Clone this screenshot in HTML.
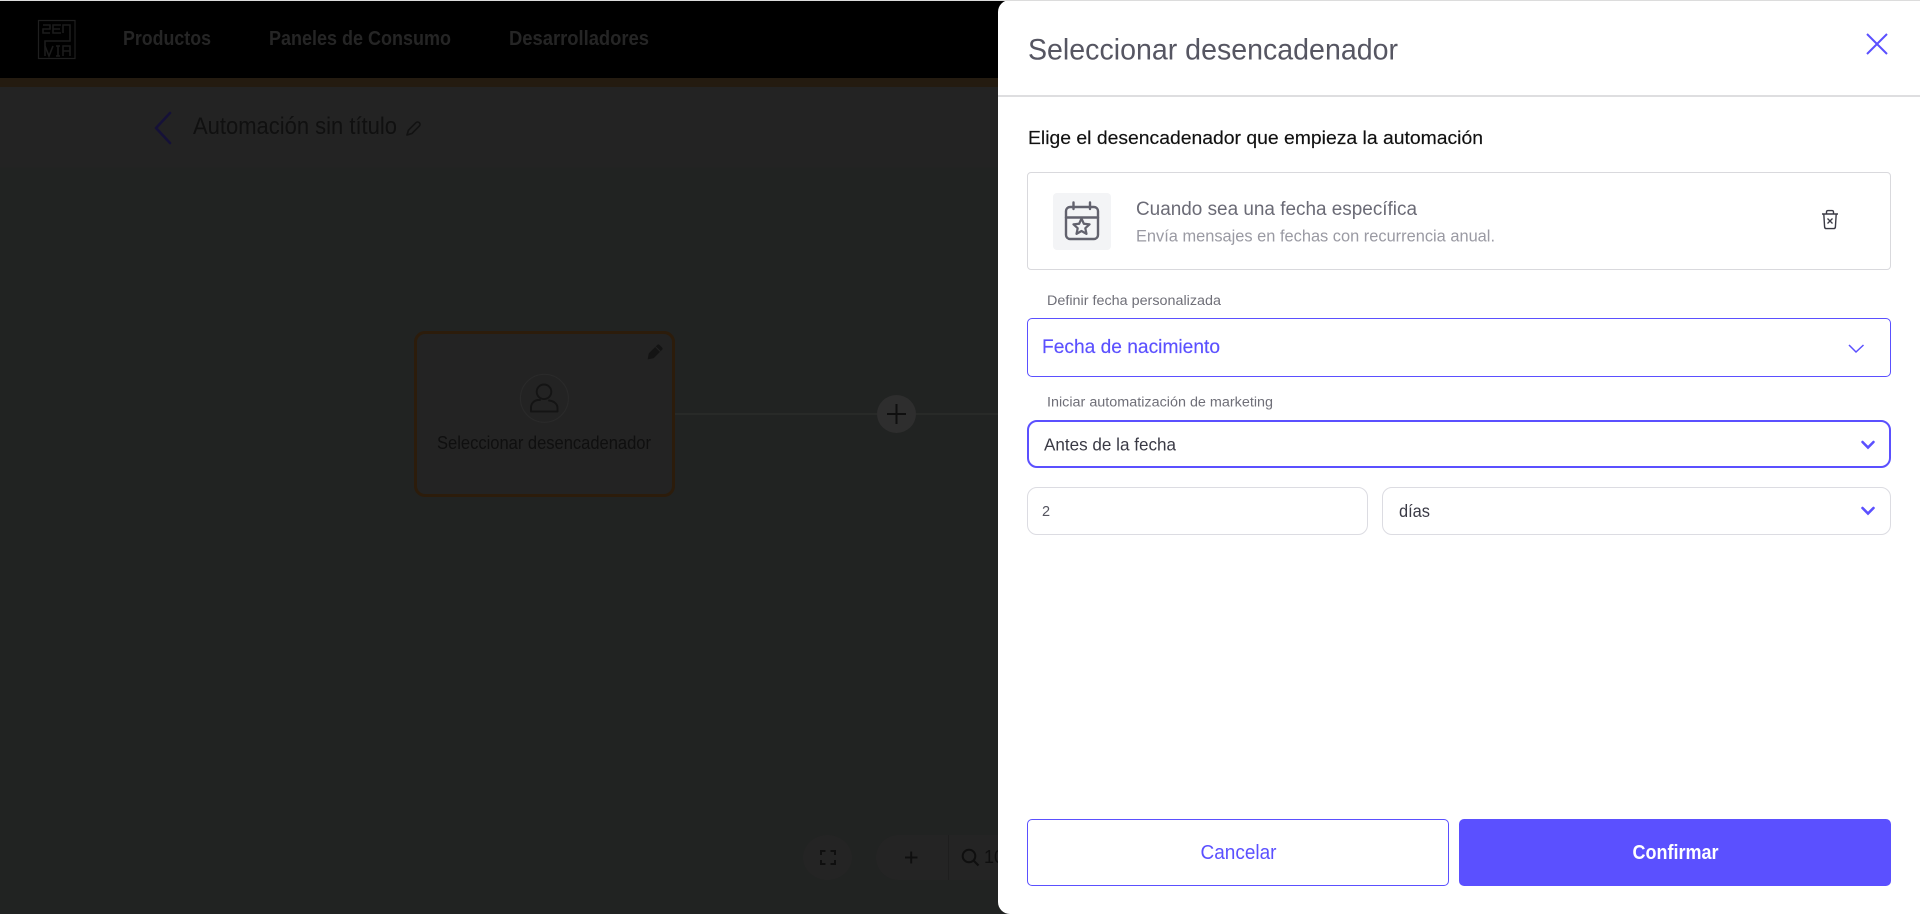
<!DOCTYPE html>
<html lang="es">
<head>
<meta charset="utf-8">
<title>Seleccionar desencadenador</title>
<style>
html,body{margin:0;padding:0;width:1920px;height:914px;overflow:hidden;background:#212322}
*{box-sizing:border-box}
div{position:absolute}
svg{position:absolute;left:0;top:0;display:block}
text{font-family:"Liberation Sans",sans-serif;white-space:pre}
#topline{left:0;top:0;width:1920px;height:1px;background:#dcdcdc;z-index:5}
#nav{left:0;top:0;width:1920px;height:78px;background:#000}
#strip{left:0;top:78px;width:1920px;height:9px;background:#241b10}
#sub{left:0;top:87px;width:1920px;height:81px;background:#232323;border-bottom:1px solid #222322}
#node{left:414px;top:331px;width:261px;height:166px;background:#232323;border:3px solid #2c1c0b;border-radius:11px}
#fs{left:803px;top:835px;width:49px;height:45px;border-radius:50%;background:#242424}
#pill{left:876px;top:835px;width:140px;height:45px;border-radius:23px 0 0 23px;background:#242424}
#plus{left:877px;top:395px;width:39px;height:38px;border-radius:50%;background:#2e2e2e}
#panel{left:998px;top:0;width:922px;height:914px;background:#fff;border-radius:12px 0 0 12px}
.b{left:29px;width:864px}
#hr{left:0;top:95px;width:922px;height:1.5px;background:#dedee0}
#card{top:172px;height:98px;border:1.5px solid #d9d9dd;border-radius:4px}
#ico{left:55px;top:193px;width:58px;height:57px;background:#f3f4f6;border-radius:4px}
#s1{top:318px;height:59px;border:1.5px solid #5b50ff;border-radius:5px}
#s2{top:420px;height:48px;border:2.5px solid #5b50ff;border-radius:10px}
#i3{left:29px;top:487px;width:341px;height:48px;border:1.5px solid #dcdce2;border-radius:10px}
#s4{left:384px;top:487px;width:509px;height:48px;border:1.5px solid #dcdce2;border-radius:10px}
#cancel{left:29px;top:819px;width:422px;height:67px;border:1.5px solid #5b50ff;border-radius:5px}
#ok{left:461px;top:819px;width:432px;height:67px;background:#5b50ff;border-radius:5px}
</style>
</head>
<body>
<div id="nav"></div>
<div id="strip"></div>
<div id="sub"></div>
<div id="node"></div>
<div id="plus"></div>
<div id="fs"></div>
<div id="pill"></div>

<svg width="1920" height="914" viewBox="0 0 1920 914" fill="none">
  <!-- logo -->
  <rect x="38.5" y="20.5" width="36.5" height="38" stroke="#1f1f1f" stroke-width="1.2"/>
  <g stroke="#1c1c1c" stroke-width="1.6" fill="none">
    <path d="M43 25H50V29H43V33H50"/>
    <path d="M61 25H53V33H61M53 29H60"/>
    <path d="M63 33V25H70V41H45V56"/>
    <path d="M45 46L49 56L53 46"/>
    <path d="M56 46H60M58 46V56M56 56H60"/>
    <path d="M63 56V46H70V56M63 51H70"/>
  </g>
  <g fill="#252525" font-weight="700" font-size="20">
    <text x="123" y="45" textLength="88" lengthAdjust="spacingAndGlyphs">Productos</text>
    <text x="269" y="45" textLength="182" lengthAdjust="spacingAndGlyphs">Paneles de Consumo</text>
    <text x="509" y="45" textLength="140" lengthAdjust="spacingAndGlyphs">Desarrolladores</text>
  </g>
  <!-- back + title -->
  <path d="M170 113L156 128L170 143" stroke="#151138" stroke-width="2.6" stroke-linecap="round" stroke-linejoin="round"/>
  <text x="193" y="134" font-size="24" fill="#101010" textLength="204" lengthAdjust="spacingAndGlyphs">Automación sin título</text>
  <g transform="translate(413 129) rotate(45)" stroke="#121212" stroke-width="1.6" stroke-linejoin="round">
    <path d="M-2.4 -6.5A2.4 2.4 0 0 1 2.4 -6.5V4L0 8.5L-2.4 4Z"/>
  </g>
  <!-- connector -->
  <rect x="675" y="413" width="202" height="2" fill="#282a28"/>
  <rect x="916" y="413" width="82" height="2" fill="#282a28"/>
  <path d="M887 414H906M896.5 404V424" stroke="#0f0f0f" stroke-width="2"/>
  <!-- node contents -->
  <g transform="translate(654 353) rotate(45)">
    <path d="M-3.4 -8A1.6 1.6 0 0 1 -1.8 -9.6H1.8A1.6 1.6 0 0 1 3.4 -8V4L0 9L-3.4 4Z" fill="#141414"/>
    <path d="M-3.4 -5.5H3.4" stroke="#232323" stroke-width="1"/>
  </g>
  <circle cx="544.4" cy="398.3" r="24" stroke="#2a2a2a" stroke-width="1.1"/>
  <circle cx="544" cy="391.8" r="7.3" stroke="#141414" stroke-width="1.9"/>
  <path d="M540 400H538.5A7.5 7.5 0 0 0 531 407.5V411.5H557.5V408C557.5 404 554 401 549 400.5" stroke="#141414" stroke-width="1.9" stroke-linejoin="round" stroke-linecap="round"/>
  <text x="437" y="449" font-size="18" fill="#0f0f0f" textLength="214" lengthAdjust="spacingAndGlyphs">Seleccionar desencadenador</text>
  <!-- bottom controls -->
  <path d="M821 855V851H825.5M830.5 851H835V855M835 860V864H830.5M825.5 864H821V860" stroke="#0f0f0f" stroke-width="2"/>
  <path d="M905 857.5H917.5M911.2 851.5V863.5" stroke="#0f0f0f" stroke-width="2"/>
  <rect x="948" y="835" width="1" height="45" fill="#1e1e1e"/>
  <circle cx="969" cy="856" r="6.3" stroke="#0f0f0f" stroke-width="2"/>
  <path d="M973.5 860.5L978.5 865.5" stroke="#0f0f0f" stroke-width="2.2"/>
  <text x="984" y="863" font-size="18" fill="#0f0f0f">100%</text>
</svg>

<div id="panel">
  <div id="hr"></div>
  <div id="card" class="b"></div>
  <div id="ico"></div>
  <div id="s1" class="b"></div>
  <div id="s2" class="b"></div>
  <div id="i3"></div>
  <div id="s4"></div>
  <div id="cancel"></div>
  <div id="ok"></div>
  <svg width="922" height="914" viewBox="998 0 922 914" fill="none">
    <text x="1028" y="59.5" font-size="29.5" fill="#565662" textLength="370" lengthAdjust="spacingAndGlyphs">Seleccionar desencadenador</text>
    <path d="M1867 34L1887 54M1887 34L1867 54" stroke="#5b50ff" stroke-width="2"/>
    <text x="1028" y="144" font-size="18.5" fill="#111" stroke="#111" stroke-width=".15" textLength="455" lengthAdjust="spacingAndGlyphs">Elige el desencadenador que empieza la automación</text>

    <!-- calendar star -->
    <rect x="1066" y="207" width="32" height="32" rx="4" stroke="#62626e" stroke-width="2.4"/>
    <path d="M1066 217.5H1098M1073.5 202.5V209M1090 202.5V209" stroke="#62626e" stroke-width="2.4" stroke-linecap="round"/>
    <path transform="translate(1081.5 227)" d="M0 -8.5L2.35 -3.24L8.08 -2.63L3.8 1.24L5 6.88L0 4L-5 6.88L-3.8 1.24L-8.08 -2.63L-2.35 -3.24Z" stroke="#62626e" stroke-width="2.2" stroke-linejoin="round"/>

    <text x="1136" y="215" font-size="19" fill="#6b6b76" textLength="281" lengthAdjust="spacingAndGlyphs">Cuando sea una fecha específica</text>
    <text x="1136" y="241.5" font-size="16.5" fill="#9a9aa3" textLength="359" lengthAdjust="spacingAndGlyphs">Envía mensajes en fechas con recurrencia anual.</text>

    <!-- trash -->
    <path d="M1822 214H1838M1826.5 214V212A1.5 1.5 0 0 1 1828 210.6H1832A1.5 1.5 0 0 1 1833.5 212V214M1823.8 214L1824.6 227A1.8 1.8 0 0 0 1826.4 228.6H1833.6A1.8 1.8 0 0 0 1835.4 227L1836.2 214" stroke="#3a3a45" stroke-width="1.4" stroke-linejoin="round"/>
    <path d="M1827.5 218.5L1832.5 223.5M1832.5 218.5L1827.5 223.5" stroke="#3a3a45" stroke-width="1.3"/>

    <text x="1047" y="305" font-size="13.5" fill="#6f6f78" textLength="174" lengthAdjust="spacingAndGlyphs">Definir fecha personalizada</text>
    <text x="1042" y="353" font-size="19.5" fill="#5b50ff" stroke="#5b50ff" stroke-width=".15" textLength="178" lengthAdjust="spacingAndGlyphs">Fecha de nacimiento</text>
    <path d="M1849 345L1856 352L1863.5 345" stroke="#5b50ff" stroke-width="1.5"/>

    <text x="1047" y="406.5" font-size="13.5" fill="#6f6f78" textLength="226" lengthAdjust="spacingAndGlyphs">Iniciar automatización de marketing</text>
    <text x="1044" y="450.5" font-size="17.5" fill="#3a3a45" textLength="132" lengthAdjust="spacingAndGlyphs">Antes de la fecha</text>
    <path d="M1862.5 442L1868 447.5L1873.5 442" stroke="#5b50ff" stroke-width="2.6" stroke-linecap="round"/>

    <text x="1042" y="516" font-size="14.5" fill="#55555f">2</text>
    <text x="1399" y="517" font-size="17.5" fill="#3a3a45" textLength="31" lengthAdjust="spacingAndGlyphs">días</text>
    <path d="M1862.5 508L1868 513.5L1873.5 508" stroke="#5b50ff" stroke-width="2.6" stroke-linecap="round"/>

    <text x="1200.5" y="859" font-size="20" fill="#5b50ff" textLength="76" lengthAdjust="spacingAndGlyphs">Cancelar</text>
    <text x="1632.5" y="859" font-size="20" font-weight="700" fill="#fff" textLength="86" lengthAdjust="spacingAndGlyphs">Confirmar</text>
  </svg>
</div>
<div id="topline"></div>
</body>
</html>
